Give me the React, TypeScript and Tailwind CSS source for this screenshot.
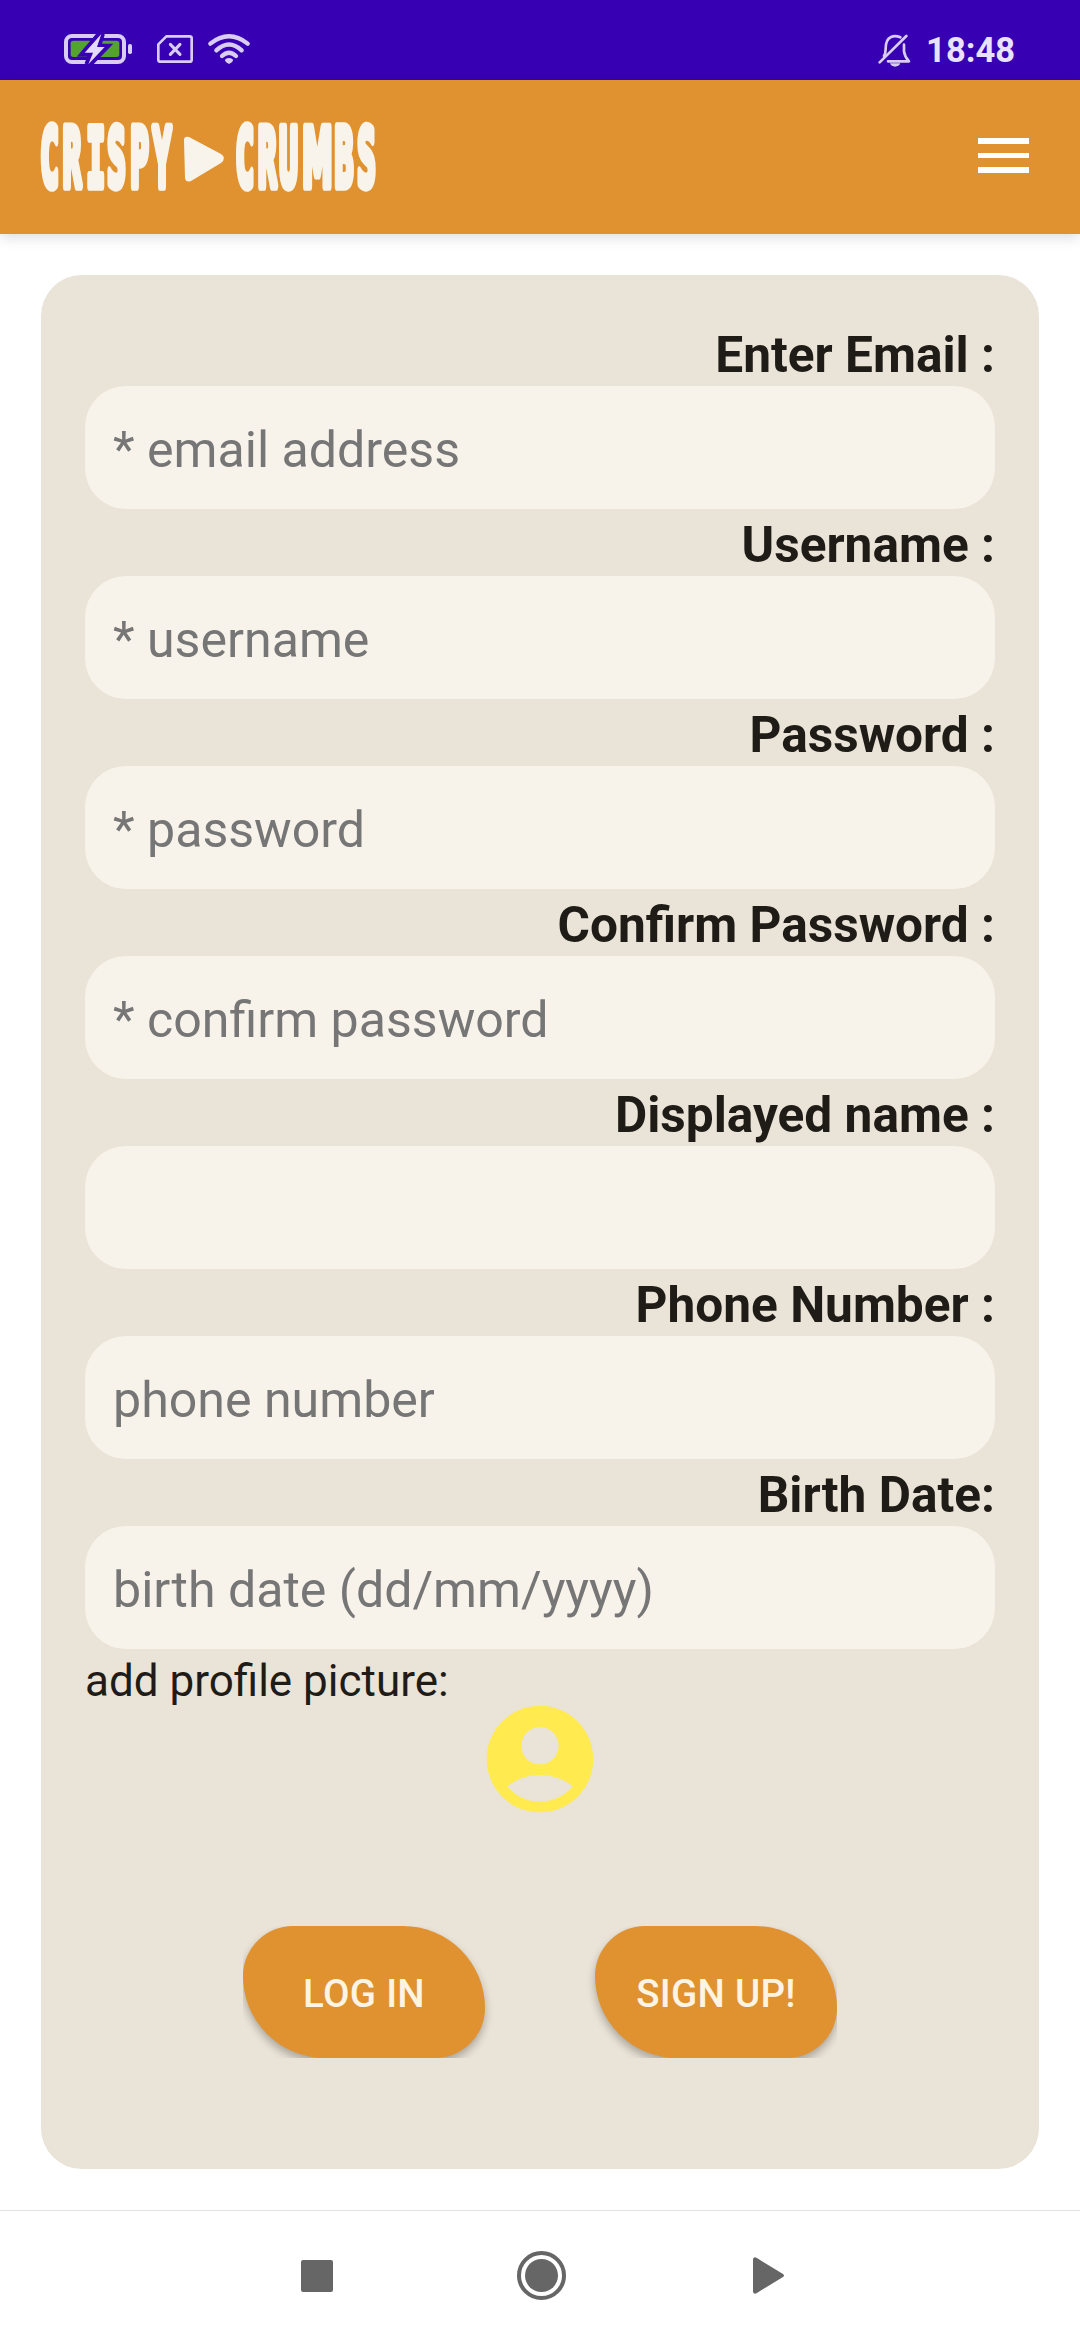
const fields = [
  { label: "Enter Email :", hint: "* email address" },
  { label: "Username :", hint: "* username" },
  { label: "Password :", hint: "* password" },
  { label: "Confirm Password :", hint: "* confirm password" },
  { label: "Displayed name :", hint: "" },
  { label: "Phone Number :", hint: "phone number" },
  { label: "Birth Date:", hint: "birth date (dd/mm/yyyy)" },
];

function StatusIcons() {
  return (
    <svg className="h-[70px] w-[240px]" viewBox="0 0 720 210" fill="none">
      <rect x="78" y="48" width="174" height="78" rx="18" stroke="#d9cdf3" strokeWidth="12" />
      <rect x="92" y="62" width="146" height="49" rx="8" fill="#54a32f" />
      <rect x="264" y="72" width="12" height="30" rx="5" fill="#d9cdf3" />
      <path
        d="M184 40L134 99H158L144 134L194 82H171L184 40Z"
        stroke="#3700b3"
        strokeWidth="22"
        strokeLinejoin="miter"
      />
      <path d="M184 42L134 98H159L145 133L194 81H171L184 42Z" fill="#e4dafa" />
      <path
        d="M379 49H449Q455 49 455 55V119Q455 125 449 125H362Q355 125 355 119V73Z"
        stroke="#d9cdf3"
        strokeWidth="8"
        strokeLinejoin="round"
      />
      <path d="M391 73L420 103M420 73L391 103" stroke="#d9cdf3" strokeWidth="9" strokeLinecap="round" />
      <g stroke="#d9cdf3" strokeWidth="13" strokeLinecap="round">
        <path d="M511 71Q567 27 623 71" />
        <path d="M529 91Q567 56 605 91" />
        <path d="M546 108Q567 88 588 108" />
      </g>
      <path d="M555 122Q555 114 567 114Q579 114 579 122Q576 128 567 132Q558 128 555 122Z" fill="#d9cdf3" />
    </svg>
  );
}

function MutedBell() {
  return (
    <svg className="h-[34px] w-[34px]" viewBox="80 40 102 102" fill="none">
      <g stroke="#d9cdf3" strokeWidth="8" strokeLinecap="round" strokeLinejoin="round">
        <path d="M98 106Q103 98 103 84Q103 56 119 49Q131 43 147 50" />
        <path d="M158 72V92Q160 108 173 122H110" />
        <path d="M85 125L165 46" />
      </g>
      <path d="M116 128H147Q143 138 131 138Q120 138 116 128Z" fill="#d9cdf3" />
    </svg>
  );
}

function Logo() {
  return (
    <svg className="h-[90px] w-[360px] overflow-visible" viewBox="0 0 360 90" fill="#f9f4eb">
      <g
        transform="scale(0.38 1)"
        stroke="#f9f4eb"
        strokeWidth="9.5"
        strokeLinejoin="round"
        fontFamily="'DejaVu Sans Mono', monospace"
        fontWeight="700"
        fontSize="81"
      >
        <text x="27 86 149 203 264 323" y="76.500">CRISPY</text>
        <text y="76.500" x="541 600 656 716 802 861">
          CRU<tspan fontFamily="'DejaVu Sans', sans-serif">M</tspan>BS
        </text>
      </g>
      <path d="M154 30Q154 26 159 27L191 44Q197 48 191 53L161 71Q156 73 155 68Z" />
    </svg>
  );
}

export default function App() {
  return (
    <div className="flex h-[2340px] w-[1080px] flex-col bg-white font-['Roboto',sans-serif]">
      <div className="flex h-20 shrink-0 justify-between bg-[#3700b3] pl-10 pr-[65px] pt-5">
        <StatusIcons />
        <div className="flex gap-[14px] pt-[14px]">
          <MutedBell />
          <span className="text-[34.5px] font-bold leading-[32px] text-[#e9e2fb]">18:48</span>
        </div>
      </div>

      <header className="flex h-[154px] shrink-0 justify-between bg-[#df922f] pl-[30px] pr-[51px] pt-[30px] shadow-[0_4px_12px_rgba(0,0,0,0.13)]">
        <Logo />
        <div className="flex flex-col gap-[9px] pt-[28px]">
          <span className="h-[5.5px] w-[51.5px] bg-white" />
          <span className="h-[5.5px] w-[51.5px] bg-white" />
          <span className="h-[5.5px] w-[51.5px] bg-white" />
        </div>
      </header>

      <main className="mx-[41px] mt-[41px] flex h-[1894px] shrink-0 flex-col rounded-[41px] bg-[#eae3d7] px-11 pt-11">
        {fields.map((f) => (
          <div key={f.label}>
            <div className="h-[67px] pt-[5px] text-right text-[49.6px] font-bold leading-[62px] text-[#1f1c17]">
              {f.label}
            </div>
            <div className="h-[123px] rounded-[41px] bg-[#f8f3ea] px-[28px] pt-[4px] text-[50.1px] leading-[121px] text-[#767676]">
              {f.hint}
            </div>
          </div>
        ))}
        <div className="h-[45px] pt-px text-[44px] leading-[62px] text-[#1f1c17]">add profile picture:</div>
        <svg className="mt-px h-[128px] w-[128px] self-center" viewBox="0 0 24 24" fill="#ffea4f">
          <path d="M12 2C6.48 2 2 6.48 2 12s4.48 10 10 10 10-4.48 10-10S17.52 2 12 2zm0 4c1.93 0 3.5 1.57 3.5 3.5S13.93 13 12 13s-3.5-1.57-3.5-3.5S10.070 6 12 6zm0 14c-2.030 0-4.430-.82-6.140-2.880C7.550 15.800 9.680 15 12 15s4.450.8 6.140 2.120C16.430 19.180 14.030 20 12 20z" />
        </svg>
        <div className="mt-[103px] flex h-[132px] gap-[110px] self-center overflow-hidden">
          {["LOG IN", "SIGN UP!"].map((t) => (
            <button
              key={t}
              className="h-[132px] w-[242px] rounded-[50px_82px_50px_82px] bg-[#df922f] pt-[5px] text-[38.5px] font-medium leading-none tracking-[0.3px] text-[#fef4e4] shadow-[0_5px_9px_rgba(0,0,0,0.27)]"
            >
              {t}
            </button>
          ))}
        </div>
      </main>

      <nav className="mt-[41px] flex h-[130px] shrink-0 items-center border-t border-[#e2e2e2] pl-[301px]">
        <span className="h-8 w-8 rounded-[2px] bg-[#666666]" />
        <span className="ml-[184px] flex h-[49px] w-[49px] items-center justify-center rounded-full border-4 border-[#666666]">
          <span className="h-[33px] w-[33px] rounded-full bg-[#666666]" />
        </span>
        <svg className="ml-[187px] h-[37px] w-[32px]" viewBox="0 0 32 37" fill="#666666">
          <path d="M0 2Q1 -0.500 3.500 0.800L30 17Q32 18.500 30 20L3.500 36.200Q1 37.500 0 35Z" />
        </svg>
      </nav>
    </div>
  );
}
